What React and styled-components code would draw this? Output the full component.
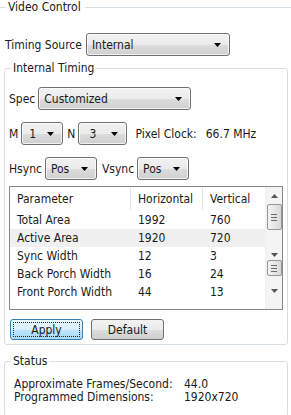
// Packages
import React from "react"
import styled, { createGlobalStyle } from "styled-components"

// Styles
const Global = createGlobalStyle`
    html, body {
        margin: 0;
        padding: 0;
        background: #ffffff;
    }

    body {
        font-family: "DejaVu Sans Condensed", "DejaVu Sans", sans-serif;
        font-size: 12px;
        color: #1a1a1a;
    }
`

const Page = styled.div`
    width: 291px;
    height: 415px;
    overflow: hidden;
    display: flex;
    flex-direction: column;
`

const Heading = styled.div`
    display: flex;
    align-items: center;
    gap: 2px;
    height: 14px;
    line-height: 14px;

    &::before {
        content: "";
        width: 6px;
        border-top: 1px solid #d5dfe5;
    }

    &::after {
        content: "";
        flex: 1;
        margin-left: 2px;
        border-top: 1px solid #d5dfe5;
    }
`

const Row = styled.div`
    display: flex;
    align-items: center;
    gap: ${p => p.$gap || 3}px;
    height: 23px;
    margin-top: ${p => p.$top || 0}px;
    padding-left: ${p => p.$left || 0}px;
`

const Label = styled.span`
    white-space: nowrap;
    margin-left: ${p => p.$left || 0}px;
`

const Select = styled.div`
    box-sizing: border-box;
    width: ${p => p.$width}px;
    height: 23px;
    display: flex;
    align-items: center;
    justify-content: space-between;
    padding: 0 8px 0 ${p => p.$pad || 5}px;
    border: 1px solid #707070;
    border-radius: 3px;
    background: linear-gradient(#f2f2f2 0%, #ebebeb 50%, #dddddd 51%, #cfcfcf 100%);
    box-shadow: inset 0 0 0 1px rgba(255, 255, 255, 0.7);
`

const Group = styled.fieldset`
    margin: ${p => p.$top || 0}px 3px 0 4px;
    padding: 0 4px ${p => p.$bottom || 4}px 4px;
    border: 1px solid #d5dfe5;
    border-radius: 3px;
    min-width: 0;

    legend {
        margin-left: 2px;
        padding: 0 2px;
        line-height: 14px;
    }
`

const Table = styled.div`
    margin-top: 6px;
    height: 124px;
    box-sizing: border-box;
    border: 1px solid #828790;
    display: flex;
`

const List = styled.div`
    flex: 1;
    display: flex;
    flex-direction: column;
`

const Line = styled.div`
    display: grid;
    grid-template-columns: 121px 72px 1fr;
    height: ${p => (p.$head ? 23 : 18)}px;
    margin-bottom: ${p => (p.$head ? 1 : 0)}px;
    background: ${p => (p.$active ? "#f0f0f0" : "transparent")};

    span {
        display: flex;
        align-items: center;
        padding-left: 7px;
        border-right: ${p => (p.$head ? "1px solid #e5e5e5" : "none")};
    }

    span:last-child {
        border-right: none;
    }
`

const Scrollbar = styled.div`
    width: 16px;
    background: #f4f4f4;
    border-left: 1px solid #f0f0f0;
    display: flex;
    flex-direction: column;
    align-items: center;
`

const Arrow = styled.div`
    height: ${p => p.$h || 17}px;
    display: flex;
    align-items: center;
    justify-content: center;
`

const Thumb = styled.div`
    box-sizing: border-box;
    width: 15px;
    height: ${p => p.$h}px;
    border: 1px solid #979797;
    border-radius: 2px;
    background: linear-gradient(90deg, #f3f3f3, #e6e6e6 50%, #d9d9d9);
    display: flex;
    flex-direction: column;
    align-items: center;
    justify-content: center;
    gap: 2px;

    i {
        width: 6px;
        border-top: 1px solid #6a6a6a;
    }
`

const Spacer = styled.div`
    height: ${p => p.$h}px;
`

const Buttons = styled.div`
    display: flex;
    gap: 8px;
    margin: 9px 0 0 1px;
`

const Button = styled.div`
    box-sizing: border-box;
    width: 73px;
    height: 21px;
    display: flex;
    align-items: center;
    justify-content: center;
    border: 1px solid ${p => (p.$primary ? "#3c7fb1" : "#707070")};
    border-radius: 3px;
    background: ${p =>
        p.$primary
            ? "linear-gradient(#eaf6fd 0%, #d9f0fc 50%, #bee6fd 51%, #a7d9f5 100%)"
            : "linear-gradient(#f2f2f2 0%, #ebebeb 50%, #dddddd 51%, #cfcfcf 100%)"};
    position: relative;

    &::after {
        content: "";
        display: ${p => (p.$primary ? "block" : "none")};
        position: absolute;
        inset: 2px;
        border: 1px dotted #2a2a2a;
    }
`

const Status = styled.div`
    display: grid;
    grid-template-columns: 170px auto;
    line-height: 13px;
    padding: 10px 0 0 5px;
`

function Caret() {
    return (
        <svg width="7" height="4" viewBox="0 0 7 4">
            <path d="M0 0h7L3.5 4z" fill="#000" />
        </svg>
    )
}

function Dropdown(props) {
    return (
        <Select $width={props.width} $pad={props.pad}>
            <span>{props.value}</span>
            <Caret />
        </Select>
    )
}

const rows = [
    ["Total Area", "1992", "760"],
    ["Active Area", "1920", "720"],
    ["Sync Width", "12", "3"],
    ["Back Porch Width", "16", "24"],
    ["Front Porch Width", "44", "13"],
]

export default function App() {
    return (
        <Page>
            <Global />

            <Heading>Video Control</Heading>

            <Row $top={19} $left={5} $gap={4}>
                <Label>Timing Source</Label>
                <Dropdown width={144} value="Internal" />
            </Row>

            <Group $top={5}>
                <legend>Internal Timing</legend>

                <Row $top={12}>
                    <Label>Spec</Label>
                    <Dropdown width={153} value="Customized" />
                </Row>

                <Row $top={12}>
                    <Label>M</Label>
                    <Dropdown width={42} pad={7} value="1" />
                    <Label $left={1}>N</Label>
                    <Dropdown width={49} pad={10} value="3" />
                    <Label $left={5}>Pixel Clock:</Label>
                    <Label $left={6}>66.7 MHz</Label>
                </Row>

                <Row $top={12}>
                    <Label>Hsync</Label>
                    <Dropdown width={52} value="Pos" />
                    <Label $left={2}>Vsync</Label>
                    <Dropdown width={52} value="Pos" />
                </Row>

                <Table>
                    <List>
                        <Line $head>
                            <span>Parameter</span>
                            <span>Horizontal</span>
                            <span>Vertical</span>
                        </Line>
                        {rows.map((r, i) => (
                            <Line key={r[0]} $active={i === 1}>
                                <span>{r[0]}</span>
                                <span>{r[1]}</span>
                                <span>{r[2]}</span>
                            </Line>
                        ))}
                    </List>

                    <Scrollbar>
                        <Arrow $h={17}>
                            <svg width="7" height="4" viewBox="0 0 7 4">
                                <path d="M0 4h7L3.5 0z" fill="#555" />
                            </svg>
                        </Arrow>
                        <Thumb $h={26}>
                            <i />
                            <i />
                            <i />
                        </Thumb>
                        <Spacer $h={20} />
                        <Arrow $h={10}>
                            <svg width="7" height="4" viewBox="0 0 7 4">
                                <path d="M0 0h7L3.5 4z" fill="#555" />
                            </svg>
                        </Arrow>
                        <Thumb $h={16}>
                            <i />
                            <i />
                            <i />
                        </Thumb>
                        <Spacer $h={8} />
                        <Arrow $h={14}>
                            <svg width="7" height="4" viewBox="0 0 7 4">
                                <path d="M0 0h7L3.5 4z" fill="#555" />
                            </svg>
                        </Arrow>
                    </Scrollbar>
                </Table>

                <Buttons>
                    <Button $primary>Apply</Button>
                    <Button>Default</Button>
                </Buttons>
            </Group>

            <Group $top={9} $bottom={12}>
                <legend>Status</legend>
                <Status>
                    <span>Approximate Frames/Second:</span>
                    <span>44.0</span>
                    <span>Programmed Dimensions:</span>
                    <span>1920x720</span>
                </Status>
            </Group>
        </Page>
    )
}
